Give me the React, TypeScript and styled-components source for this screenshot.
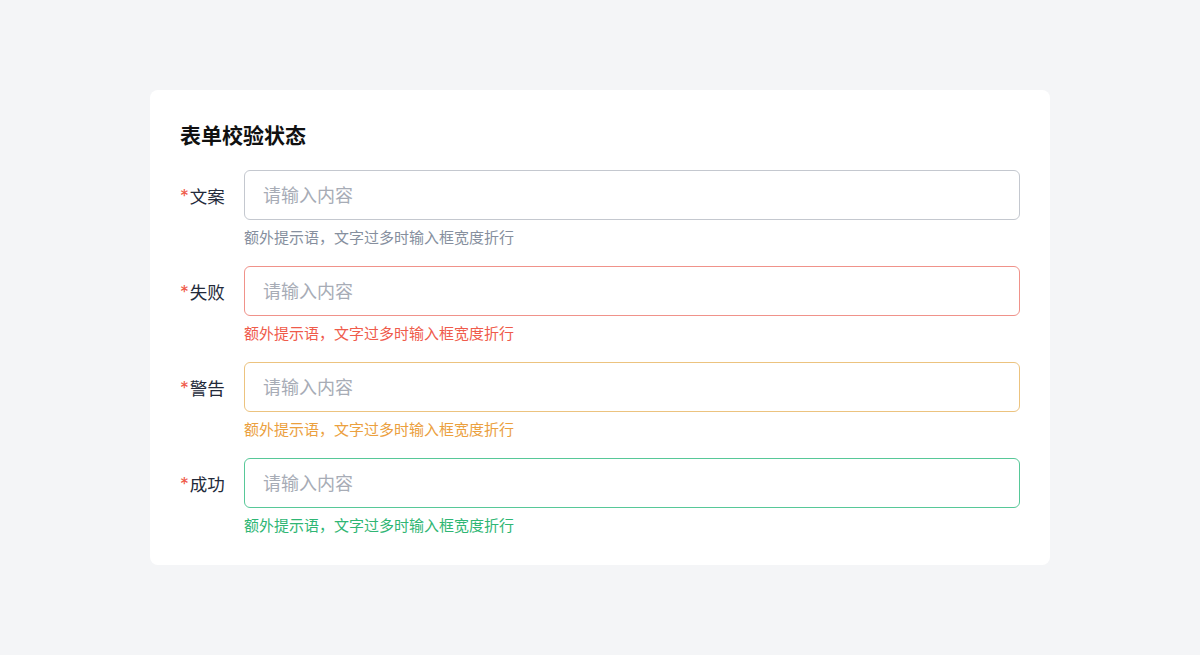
import React from 'react';
import styled, { createGlobalStyle } from 'styled-components';

type Status = 'default' | 'error' | 'warning' | 'success';

const borderColors: Record<Status, string> = {
  default: '#c4c8cf',
  error: '#f0928a',
  warning: '#ecc37f',
  success: '#57c898',
};

const tipColors: Record<Status, string> = {
  default: '#868f9e',
  error: '#ef5b4b',
  warning: '#eba03e',
  success: '#2fb674',
};

const GlobalStyle = createGlobalStyle`
  html, body {
    margin: 0;
    padding: 0;
    background: #f4f5f7;
  }
  body {
    font-family: Inter, "Noto Sans CJK SC", "Noto Sans", sans-serif;
  }
  * {
    box-sizing: border-box;
  }
`;

const Page = styled.div`
  min-height: 655px;
  padding-top: 90px;
  display: flex;
  justify-content: center;
  align-items: flex-start;
`;

const Card = styled.div`
  width: 900px;
  background: #ffffff;
  border-radius: 8px;
  padding: 30px 30px 29px;
`;

const Title = styled.h2`
  margin: 0 0 19px;
  font-size: 21px;
  line-height: 31px;
  font-weight: 600;
  color: #111111;
`;

const Form = styled.div`
  display: flex;
  flex-direction: column;
  gap: 18px;
`;

const Row = styled.div`
  display: grid;
  grid-template-columns: 64px 1fr;
  row-gap: 8px;
`;

const Label = styled.label`
  height: 50px;
  display: flex;
  align-items: center;
  font-size: 17.5px;
  color: #232a3a;
`;

const Star = styled.span`
  color: #ef5b4b;
  margin-right: 1px;
`;

const Input = styled.input<{ $status: Status }>`
  height: 50px;
  width: 100%;
  border: 1px solid ${(p) => borderColors[p.$status]};
  border-radius: 6px;
  padding: 0 18px;
  font-family: inherit;
  font-size: 18px;
  color: #232a3a;
  outline: none;
  background: #fff;
  &::placeholder {
    color: #a7acb6;
  }
`;

const Tip = styled.div<{ $status: Status }>`
  grid-column: 2;
  font-size: 15px;
  line-height: 20px;
  color: ${(p) => tipColors[p.$status]};
`;

const fields: { label: string; status: Status }[] = [
  { label: '文案', status: 'default' },
  { label: '失败', status: 'error' },
  { label: '警告', status: 'warning' },
  { label: '成功', status: 'success' },
];

export default function App() {
  return (
    <>
      <GlobalStyle />
      <Page>
        <Card>
          <Title>表单校验状态</Title>
          <Form>
            {fields.map((f) => (
              <Row key={f.label}>
                <Label>
                  <Star>*</Star>
                  {f.label}
                </Label>
                <Input $status={f.status} placeholder="请输入内容" />
                <Tip $status={f.status}>额外提示语，文字过多时输入框宽度折行</Tip>
              </Row>
            ))}
          </Form>
        </Card>
      </Page>
    </>
  );
}
